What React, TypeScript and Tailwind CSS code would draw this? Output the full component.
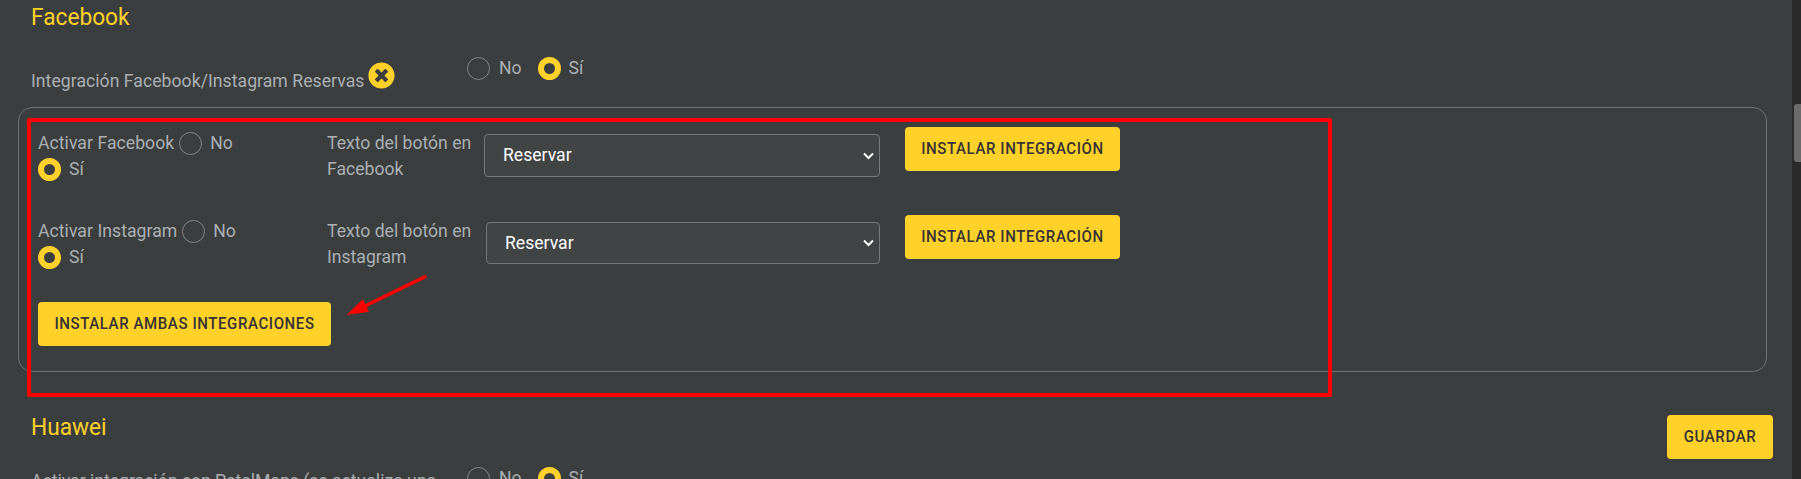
import { FaTimesCircle } from 'react-icons/fa';

const Radio = ({ checked }: { checked?: boolean }) => (
  <span
    className={
      checked
        ? 'block w-[23px] h-[23px] shrink-0 rounded-full border-[6px] border-[#ffd129] bg-[#3b3e3f]'
        : 'block w-[23px] h-[23px] shrink-0 rounded-full border border-[#85888a]'
    }
  />
);

// the reference's hinted glyphs run a bit taller than Roboto does here
const Tall = ({ children, className }: { children: React.ReactNode; className?: string }) => (
  <span className={`inline-block scale-y-[1.06] ${className ?? ''}`}>{children}</span>
);

const YesNo = () => (
  <div className="flex items-center h-[22px] leading-[22px]">
    <Radio />
    <Tall className="ml-[9px]">No</Tall>
    <span className="ml-[16px]"><Radio checked /></span>
    <Tall className="ml-[8px]">Sí</Tall>
  </div>
);

const YellowButton = ({ children, className }: { children: React.ReactNode; className?: string }) => (
  <button className={`h-[44px] shrink-0 rounded-[4px] bg-[#ffd129] text-[15px] font-medium tracking-[0.6px] text-[#333333] uppercase ${className ?? ''}`}>
    <span className="inline-block scale-y-[1.1]">{children}</span>
  </button>
);

const Heading = ({ children, className }: { children: React.ReactNode; className?: string }) => (
  <h2 className={`text-[22.7px] leading-[29px] text-[#ffd129] ${className ?? ''}`}>
    <Tall>{children}</Tall>
  </h2>
);

const SelectBox = ({ className }: { className: string }) => (
  <div className={`relative ${className}`}>
    <select className="w-full h-full appearance-none rounded-[4px] border border-[#75787a] bg-[#404445] pl-[18px] text-[17.6px] text-white outline-none">
      <option>Reservar</option>
    </select>
    <svg className="absolute right-[6px] top-1/2 -mt-[4px] pointer-events-none" width="11" height="8" viewBox="0 0 11 8" fill="none">
      <path d="M1 1.5 5.5 6 10 1.5" stroke="white" strokeWidth="2" />
    </svg>
  </div>
);

const IntegrationRow = ({ label, network, rowClass, textWidth, selectClass, labelGap }: {
  label: string;
  network: string;
  rowClass: string;
  textWidth: string;
  selectClass: string;
  labelGap: string;
}) => (
  <div className={`flex items-start pt-0 ${rowClass}`}>
    <div className="w-[289px] shrink-0 pt-[3px]">
      <div className="flex items-center h-[26px] leading-[26px]">
        <Tall className="tracking-[0.05px]">{label}</Tall>
        <span className={labelGap}><Radio /></span>
        <Tall className="ml-[8px]">No</Tall>
      </div>
      <div className="flex items-center h-[26px] leading-[26px]">
        <Radio checked />
        <Tall className="ml-[8px]">Sí</Tall>
      </div>
    </div>
    <div className={`shrink-0 pt-[3px] leading-[26px] ${textWidth}`}>
      <Tall>Texto del botón en</Tall><br /><Tall>{network}</Tall>
    </div>
    <SelectBox className={selectClass} />
    <YellowButton className="w-[215px] ml-[25px]">Instalar integración</YellowButton>
  </div>
);

export default function App() {
  return (
    <div className="relative flex h-[479px] overflow-hidden bg-[#3b3e3f] font-['Roboto',sans-serif] text-[17.6px] text-[#aab0b4]">
      <main className="flex-1 pl-[18px]">
        <Heading className="ml-[13px] mt-[3px]">Facebook</Heading>

        <div className="flex items-start mt-[25px] ml-[13px]">
          <div className="flex items-start w-[436px] mt-[5px]">
            <Tall className="mt-[7px] leading-[24px] tracking-[0.05px]">Integración Facebook/Instagram Reservas</Tall>
            <FaTimesCircle className="ml-[4px] w-[27px] h-[27px] text-[#ffd129]" />
          </div>
          <YesNo />
        </div>

        <div className="mt-[14px] mr-[25px] h-[265px] rounded-[14px] border border-[#6e7173] pt-[19px] pl-[19px]">
          <IntegrationRow
            label="Activar Facebook"
            network="Facebook"
            rowClass="h-[88px]"
            textWidth="w-[157px]"
            selectClass="w-[396px] h-[43px] mt-[7px]"
            labelGap="ml-[5px]"
          />
          <IntegrationRow
            label="Activar Instagram"
            network="Instagram"
            rowClass="h-[87px]"
            textWidth="w-[159px]"
            selectClass="w-[394px] h-[42px] mt-[7px]"
            labelGap="ml-[5px]"
          />
          <YellowButton className="w-[293px]">Instalar ambas integraciones</YellowButton>
        </div>

        <div className="flex items-start justify-between mt-[41px] pr-[19px]">
          <Heading className="ml-[13px]">Huawei</Heading>
          <YellowButton className="w-[106px] mt-[2px]">Guardar</YellowButton>
        </div>

        <div className="flex items-start mt-[8px] ml-[13px]">
          <div className="w-[436px] pt-[2px] leading-[24px]">Activar integración con PetalMaps (se actualiza una</div>
          <YesNo />
        </div>
      </main>

      <div className="w-[9px] shrink-0 bg-[#2b2b2b] pt-[104px] pl-[2px]">
        <div className="h-[58px] rounded-l-[3px] bg-[#6b6b6b]" />
      </div>

      {/* red annotation drawn over the screenshot */}
      <div className="absolute left-[27px] top-[118px] w-[1305px] h-[279px] rounded-[2px] border-4 border-[#ff0000] pointer-events-none" />
      <svg className="absolute left-[340px] top-[270px] pointer-events-none" width="90" height="50" viewBox="0 0 90 50">
        <path d="M85 6.7 26 35.5" stroke="#ff0000" strokeWidth="3.4" strokeLinecap="round" />
        <path d="M6.6 45 22.8 29.3 29 41.7Z" fill="#ff0000" />
      </svg>
    </div>
  );
}
